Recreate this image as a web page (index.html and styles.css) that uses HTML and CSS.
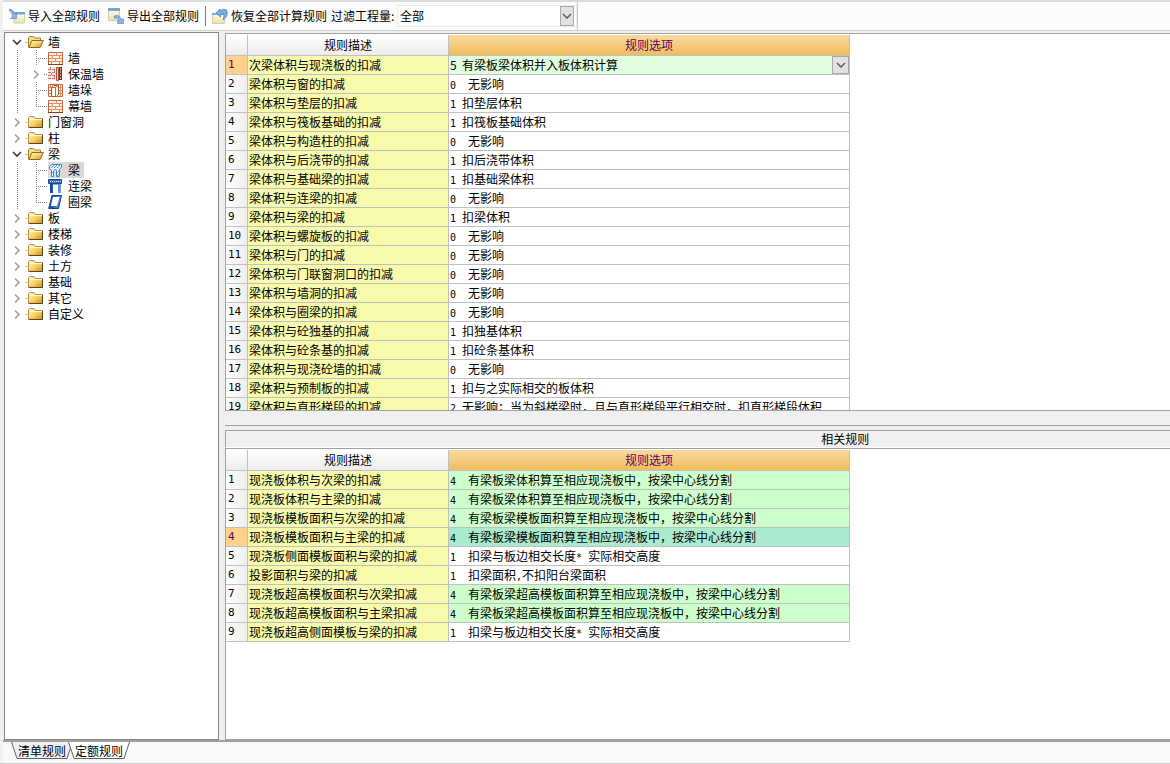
FILE: index.html
```html
<!DOCTYPE html>
<html lang="zh-CN">
<head>
<meta charset="utf-8">
<title>计算规则</title>
<link rel="stylesheet" href="styles.css">
</head>
<body>
<svg class="defs" aria-hidden="true">
  <defs>
    <linearGradient id="gold" x1="0" y1="0" x2="1" y2="1"><stop offset="0" stop-color="#fff6c4"/><stop offset=".5" stop-color="#f6d36c"/><stop offset="1" stop-color="#c98a1c"/></linearGradient>
    <linearGradient id="sheet" x1="0" y1="0" x2="0" y2="1"><stop offset="0" stop-color="#fffef0"/><stop offset="1" stop-color="#ece3a8"/></linearGradient>
    <linearGradient id="navy" x1="0" y1="0" x2="1" y2="0"><stop offset="0" stop-color="#123f94"/><stop offset="1" stop-color="#6ea2e4"/></linearGradient>
    <symbol id="closed" viewBox="0 0 16 16"><path d="M.5 13.500V3.500L1.500 2.500H6L7.500 4.500H14.500V13.500Z" fill="url(#gold)" stroke="#b8964c"/><path d="M1.500 5.500H14" stroke="#fff7d2"/><path d="M1 13.500H14.500V5" fill="none" stroke="#5c4713"/></symbol>
    <symbol id="open" viewBox="0 0 16 16"><path d="M.5 13V3.500L1.500 2.500H5.500L7 4H12.500V7" fill="#f4dc8e" stroke="#a98332"/><path d="M.7 13.500L4 6.500H15.500L12 13.500Z" fill="url(#gold)" stroke="#8a6a20"/></symbol>
    <symbol id="brick" viewBox="0 0 16 16"><path d="M.5 2.500H14.500V14.500H.5Z" fill="#fdf1e8" stroke="#c9683e"/><path d="M1 5.500H14M1 8.500H14M1 11.500H14M8.500 3V5M4.500 6V8M11.500 6V8M7.500 9V11M3.500 12V14M11.500 12V14" stroke="#e2906a" fill="none"/><path d="M0 14.500H15" stroke="#8f3c1c"/></symbol>
    <symbol id="insul" viewBox="0 0 16 16"><path d="M0 1H9V14H0Z" fill="#f8e2de"/><path d="M0 3.500H9M0 6.500H9M0 9.500H9M0 12.500H9" stroke="#d0766a" stroke-dasharray="3 1"/><path d="M2.500 1V3M6.500 4V6M3.500 7V9M6.500 10V12" stroke="#b08089"/><path d="M8.500 1.500H10.500V14.500H8.500Z" fill="#e8c0a8" stroke="#9a5a44"/><path d="M11 1H14V14H11Z" fill="#96230e"/><path d="M12.500 2V13" stroke="#f0a070" stroke-dasharray="2 1"/></symbol>
    <symbol id="pier" viewBox="0 0 16 16"><path d="M.5 2.500H14.500V14.500H.5Z" fill="#fdf1e8" stroke="#c9683e"/><path d="M1 5.500H14M1 8.500H4M11 8.500H14M1 11.500H4M11 11.500H14M12.500 3V14M2.500 3V5" stroke="#e2906a"/><path d="M3.500 5L5.500 3.500H10.500V12.500L8.500 14.500H3.500Z" fill="#fffaf6" stroke="#b85229"/><path d="M7.500 5V14M3.500 5.500H7.500L10 3.500" fill="none" stroke="#c96838"/></symbol>
    <symbol id="beam" viewBox="0 0 16 16"><path d="M1.500 4.500L4 2.500H13.500V5L11.500 7.500V14.500H8.500V8.500L7.500 7L5.500 9V14.500H3.500V8.500L1.500 6.500Z" fill="#eef8ff" stroke="#2f8cd2"/><path d="M3 6L6 3M6 6L9 3M9 6L12 3M4 11L5 10M9 11L11 9M9 14L11 12" stroke="#48a2df"/></symbol>
    <symbol id="link" viewBox="0 0 16 16"><path d="M.5 1.500H13.500V5.500H.5Z" fill="#3c70c0" stroke="#1b4594"/><path d="M2 3.500H13" stroke="#cfe0f8" stroke-dasharray="1 1"/><path d="M2 6H5V15H2ZM10 6H13V15H10Z" fill="url(#navy)"/><path d="M5 6.500H10" stroke="#7eaae2"/></symbol>
    <symbol id="ring" viewBox="0 0 16 16"><path d="M4 1.500H13.500L10.500 14.500H.7Z" fill="url(#navy)" stroke="#173e89"/><path d="M5 3H11.500L9 12H2.800Z" fill="#fff"/></symbol>
    <symbol id="import" viewBox="0 0 16 16"><path d="M5 5H15.500V15H5Z" fill="url(#sheet)" stroke="#d3ceae"/><path d="M5 4H16V6.500H5Z" fill="#7ea2d0"/><path d="M.5 1Q5 2 5.500 6L7.500 4.500V10.500H1.500L3.500 8.500Q3.500 4 .5 3Z" fill="#8bb1ea" stroke="#5d8bd2" stroke-width=".7"/></symbol>
    <symbol id="export" viewBox="0 0 16 16"><path d="M.5 1.500H11.500V12.500H.5Z" fill="url(#sheet)" stroke="#d3ceae"/><path d="M0 0H12V3H0Z" fill="#7ea2d0"/><path d="M6 8Q12 6 12.500 11H15.500V15.500H9.500V13L11 12Q10 9 6 10Z" fill="#8bb1ea" stroke="#5d8bd2" stroke-width=".7"/></symbol>
    <symbol id="restore" viewBox="0 0 16 16"><path d="M.5 5.500H12.500V15.500H.5Z" fill="url(#sheet)" stroke="#d3ceae"/><path d="M0 5H13V7H0Z" fill="#8aa9d0"/><path d="M4 5L8 1V3Q11 0 14.500 2Q17 8 11 12Q13 7 11 5.500Q9.500 5.500 8.500 7V9Z" fill="#7eabe8" stroke="#467bc7" stroke-width=".7"/></symbol>
    <symbol id="down" viewBox="0 0 10 10"><path d="M1 3L5 7L9 3" fill="none" stroke="#505050" stroke-width="1.300"/></symbol>
    <symbol id="t-open" viewBox="0 0 23 16"><path d="M8 6L12 10L16 6" fill="none" stroke="#404040" stroke-width="1.700"/><path d="M20.500 8.500H23" stroke="#808080" stroke-dasharray="1 1"/></symbol>
    <symbol id="t-closed" viewBox="0 0 23 16"><path d="M10 4.500L14 8.500L10 12.500" fill="none" stroke="#a0a0a0" stroke-width="1.500"/><path d="M20.500 8.500H23" stroke="#808080" stroke-dasharray="1 1"/></symbol>
    <symbol id="b-mid" viewBox="0 0 43 16"><path d="M12.500 0V16M31.500 0V16M33 8.500H43" stroke="#808080" stroke-dasharray="1 1"/></symbol>
    <symbol id="b-last" viewBox="0 0 43 16"><path d="M12.500 0V16M31.500 0V9M33 8.500H43" stroke="#808080" stroke-dasharray="1 1"/></symbol>
    <symbol id="b-more" viewBox="0 0 43 16"><path d="M12.500 0V16M39 8.500H43" stroke="#808080" stroke-dasharray="1 1"/><path d="M29 4.500L33 8.500L29 12.500" fill="none" stroke="#a0a0a0" stroke-width="1.500"/></symbol>
  </defs>
</svg>
<div class="app">
  <header class="top">
    <div class="toolbar">
      <button class="tool" type="button"><svg class="icon"><use href="#import"/></svg>导入全部规则</button>
      <button class="tool" type="button"><svg class="icon"><use href="#export"/></svg>导出全部规则</button>
      <span class="separator"></span>
      <button class="tool" type="button"><svg class="icon"><use href="#restore"/></svg>恢复全部计算规则</button>
      <label class="filter-label" for="filter">过滤工程量:</label>
      <div class="combo filter"><select id="filter"><option>全部</option></select><span class="arrow"><svg><use href="#down"/></svg></span></div>
    </div>
  </header>
  <main class="work">
    <nav class="tree" aria-label="构件类型">
      <ul>
        <li><div class="node"><button type="button" class="toggle" aria-label="折叠 墙"><svg><use href="#t-open"/></svg></button><svg class="icon"><use href="#open"/></svg><span class="name">墙</span></div>
          <ul>
            <li class="node"><svg class="branch"><use href="#b-mid"/></svg><svg class="icon"><use href="#brick"/></svg><span class="name">墙</span></li>
            <li class="node"><button type="button" class="toggle" aria-label="展开 保温墙"><svg class="branch"><use href="#b-more"/></svg></button><svg class="icon"><use href="#insul"/></svg><span class="name">保温墙</span></li>
            <li class="node"><svg class="branch"><use href="#b-mid"/></svg><svg class="icon"><use href="#pier"/></svg><span class="name">墙垛</span></li>
            <li class="node"><svg class="branch"><use href="#b-last"/></svg><svg class="icon"><use href="#brick"/></svg><span class="name">幕墙</span></li>
          </ul>
        </li>
        <li class="node"><button type="button" class="toggle" aria-label="展开 门窗洞"><svg><use href="#t-closed"/></svg></button><svg class="icon"><use href="#closed"/></svg><span class="name">门窗洞</span></li>
        <li class="node"><button type="button" class="toggle" aria-label="展开 柱"><svg><use href="#t-closed"/></svg></button><svg class="icon"><use href="#closed"/></svg><span class="name">柱</span></li>
        <li><div class="node"><button type="button" class="toggle" aria-label="折叠 梁"><svg><use href="#t-open"/></svg></button><svg class="icon"><use href="#open"/></svg><span class="name">梁</span></div>
          <ul>
            <li class="node current"><svg class="branch"><use href="#b-mid"/></svg><svg class="icon"><use href="#beam"/></svg><span class="name">梁</span></li>
            <li class="node"><svg class="branch"><use href="#b-mid"/></svg><svg class="icon"><use href="#link"/></svg><span class="name">连梁</span></li>
            <li class="node"><svg class="branch"><use href="#b-last"/></svg><svg class="icon"><use href="#ring"/></svg><span class="name">圈梁</span></li>
          </ul>
        </li>
        <li class="node"><button type="button" class="toggle" aria-label="展开 板"><svg><use href="#t-closed"/></svg></button><svg class="icon"><use href="#closed"/></svg><span class="name">板</span></li>
        <li class="node"><button type="button" class="toggle" aria-label="展开 楼梯"><svg><use href="#t-closed"/></svg></button><svg class="icon"><use href="#closed"/></svg><span class="name">楼梯</span></li>
        <li class="node"><button type="button" class="toggle" aria-label="展开 装修"><svg><use href="#t-closed"/></svg></button><svg class="icon"><use href="#closed"/></svg><span class="name">装修</span></li>
        <li class="node"><button type="button" class="toggle" aria-label="展开 土方"><svg><use href="#t-closed"/></svg></button><svg class="icon"><use href="#closed"/></svg><span class="name">土方</span></li>
        <li class="node"><button type="button" class="toggle" aria-label="展开 基础"><svg><use href="#t-closed"/></svg></button><svg class="icon"><use href="#closed"/></svg><span class="name">基础</span></li>
        <li class="node"><button type="button" class="toggle" aria-label="展开 其它"><svg><use href="#t-closed"/></svg></button><svg class="icon"><use href="#closed"/></svg><span class="name">其它</span></li>
        <li class="node"><button type="button" class="toggle" aria-label="展开 自定义"><svg><use href="#t-closed"/></svg></button><svg class="icon"><use href="#closed"/></svg><span class="name">自定义</span></li>
      </ul>
    </nav>
    <div class="panes">
      <section class="pane">
        <table class="rules">
          <colgroup><col class="c-num"><col class="c-desc"><col class="c-opt"></colgroup>
          <thead><tr><th></th><th>规则描述</th><th class="hot">规则选项</th></tr></thead>
          <tbody>
            <tr class="active editing"><th>1</th><td>次梁体积与现浇板的扣减</td><td><div class="combo"><select aria-label="规则选项"><option>5&nbsp;&nbsp;有梁板梁体积并入板体积计算</option></select><span class="arrow"><svg><use href="#down"/></svg></span></div></td></tr>
            <tr><th>2</th><td>梁体积与窗的扣减</td><td><span class="n">0  </span>无影响</td></tr>
            <tr><th>3</th><td>梁体积与垫层的扣减</td><td><span class="n">1 </span>扣垫层体积</td></tr>
            <tr><th>4</th><td>梁体积与筏板基础的扣减</td><td><span class="n">1 </span>扣筏板基础体积</td></tr>
            <tr><th>5</th><td>梁体积与构造柱的扣减</td><td><span class="n">0  </span>无影响</td></tr>
            <tr><th>6</th><td>梁体积与后浇带的扣减</td><td><span class="n">1 </span>扣后浇带体积</td></tr>
            <tr><th>7</th><td>梁体积与基础梁的扣减</td><td><span class="n">1 </span>扣基础梁体积</td></tr>
            <tr><th>8</th><td>梁体积与连梁的扣减</td><td><span class="n">0  </span>无影响</td></tr>
            <tr><th>9</th><td>梁体积与梁的扣减</td><td><span class="n">1 </span>扣梁体积</td></tr>
            <tr><th>10</th><td>梁体积与螺旋板的扣减</td><td><span class="n">0  </span>无影响</td></tr>
            <tr><th>11</th><td>梁体积与门的扣减</td><td><span class="n">0  </span>无影响</td></tr>
            <tr><th>12</th><td>梁体积与门联窗洞口的扣减</td><td><span class="n">0  </span>无影响</td></tr>
            <tr><th>13</th><td>梁体积与墙洞的扣减</td><td><span class="n">0  </span>无影响</td></tr>
            <tr><th>14</th><td>梁体积与圈梁的扣减</td><td><span class="n">0  </span>无影响</td></tr>
            <tr><th>15</th><td>梁体积与砼独基的扣减</td><td><span class="n">1 </span>扣独基体积</td></tr>
            <tr><th>16</th><td>梁体积与砼条基的扣减</td><td><span class="n">1 </span>扣砼条基体积</td></tr>
            <tr><th>17</th><td>梁体积与现浇砼墙的扣减</td><td><span class="n">0  </span>无影响</td></tr>
            <tr><th>18</th><td>梁体积与预制板的扣减</td><td><span class="n">1 </span>扣与之实际相交的板体积</td></tr>
            <tr><th>19</th><td>梁体积与直形梯段的扣减</td><td><span class="n">2 </span>无影响；当为斜梯梁时，且与直形梯段平行相交时，扣直形梯段体积</td></tr>
          </tbody>
        </table>
      </section>
      <div class="splitter"></div>
      <h2 class="caption">相关规则</h2>
      <section class="pane">
        <table class="rules">
          <colgroup><col class="c-num"><col class="c-desc"><col class="c-opt"></colgroup>
          <thead><tr><th></th><th>规则描述</th><th class="hot">规则选项</th></tr></thead>
          <tbody>
            <tr class="linked"><th>1</th><td>现浇板体积与次梁的扣减</td><td><span class="n">4  </span>有梁板梁体积算至相应现浇板中，按梁中心线分割</td></tr>
            <tr class="linked"><th>2</th><td>现浇板体积与主梁的扣减</td><td><span class="n">4  </span>有梁板梁体积算至相应现浇板中，按梁中心线分割</td></tr>
            <tr class="linked"><th>3</th><td>现浇板模板面积与次梁的扣减</td><td><span class="n">4  </span>有梁板梁模板面积算至相应现浇板中，按梁中心线分割</td></tr>
            <tr class="linked active"><th>4</th><td>现浇板模板面积与主梁的扣减</td><td><span class="n">4  </span>有梁板梁模板面积算至相应现浇板中，按梁中心线分割</td></tr>
            <tr><th>5</th><td>现浇板侧面模板面积与梁的扣减</td><td><span class="n">1  </span>扣梁与板边相交长度<span class="n">* </span>实际相交高度</td></tr>
            <tr><th>6</th><td>投影面积与梁的扣减</td><td><span class="n">1  </span>扣梁面积<span class="n">,</span>不扣阳台梁面积</td></tr>
            <tr class="linked"><th>7</th><td>现浇板超高模板面积与次梁扣减</td><td><span class="n">4  </span>有梁板梁超高模板面积算至相应现浇板中，按梁中心线分割</td></tr>
            <tr class="linked"><th>8</th><td>现浇板超高模板面积与主梁扣减</td><td><span class="n">4  </span>有梁板梁超高模板面积算至相应现浇板中，按梁中心线分割</td></tr>
            <tr><th>9</th><td>现浇板超高侧面模板与梁的扣减</td><td><span class="n">1  </span>扣梁与板边相交长度<span class="n">* </span>实际相交高度</td></tr>
          </tbody>
        </table>
      </section>
    </div>
  </main>
  <footer class="tabs">
    <button type="button" class="tab"><svg class="shape" viewBox="0 0 62 17" preserveAspectRatio="none"><path d="M.5 0L6 16.500H56L61.500 0" fill="#f0f0f0" stroke="#606060"/></svg><span>清单规则</span></button>
    <button type="button" class="tab"><svg class="shape" viewBox="0 0 62 17" preserveAspectRatio="none"><path d="M.5 0L6 16.500H56L61.500 0" fill="#fff" stroke="#606060"/></svg><span>定额规则</span></button>
  </footer>
</div>
</body>
</html>
```

FILE: styles.css
```css
* {
  box-sizing: border-box;
}

body {
  margin: 0;
  background: #f0f0f0;
  color: #000;
  font: 12px/16px "Noto Sans CJK SC", sans-serif;
}

button,
select {
  margin: 0;
  padding: 0;
  border: 0;
  background: none;
  color: inherit;
  font: inherit;
}

ul {
  margin: 0;
  padding: 0;
  list-style: none;
}

svg {
  display: block;
}

.defs {
  position: absolute;
  width: 0;
  height: 0;
}

.app {
  display: flex;
  flex-direction: column;
  height: 100vh;
  padding-left: 3px;
  border-bottom: 1px solid #d0d0d0;
}

.icon {
  flex: none;
  width: 16px;
  height: 16px;
}

/* Toolbar */

.top {
  display: flex;
  flex: none;
  height: 31px;
  border-top: 2px solid #dcdcdc;
  border-bottom: 1px solid #d0d0d0;
  background: #fcfcfc;
}

.toolbar {
  display: flex;
  align-items: center;
  padding: 0 0 0 6px;
  border-right: 1px solid #c8c8c8;
}

.tool {
  display: flex;
  align-items: center;
  gap: 3px;
  margin-right: 8px;
}

.separator {
  width: 1px;
  height: 20px;
  margin-left: -2px;
  margin-right: 6px;
  background: #808080;
}

.tool + .filter-label {
  margin-left: -4px;
}

.filter-label {
  width: 66px;
  white-space: nowrap;
}

.combo {
  position: relative;
}

.combo select {
  width: 100%;
  height: 100%;
  appearance: none;
  outline: 0;
}

.arrow {
  position: absolute;
  top: 0;
  right: 0;
  bottom: 0;
  display: grid;
  place-items: center;
  width: 17px;
  border: 1px solid #a8a8a8;
  background: #e1e1e1;
  pointer-events: none;
}

.arrow svg {
  width: 10px;
  height: 10px;
}

.filter {
  width: 180px;
  height: 22px;
  border: 1px solid #ececec;
  background: #fff;
}

.filter select {
  padding-left: 2px;
}

.filter .arrow {
  right: 2px;
  width: 14px;
}

/* Work area */

.work {
  display: flex;
  flex: 1;
  gap: 6px;
  min-height: 0;
  padding-top: 1px;
  border-bottom: 2px solid #a0a0a0;
}

.tree {
  flex: none;
  width: 215px;
  padding-top: 1px;
  margin-left: 1px;
  overflow: hidden;
  border: 1px solid #828790;
  background: #fff;
}

.node {
  display: flex;
  height: 16px;
}

.toggle svg {
  width: 23px;
  height: 16px;
}

.branch,
.toggle .branch {
  flex: none;
  width: 43px;
  height: 16px;
}

.name {
  padding: 0 4px;
}

.current .icon,
.current .name {
  background: #d9d9d9;
}

/* Rule grids */

.panes {
  display: grid;
  flex: 1;
  grid-template-rows: minmax(0, 378fr) 15px 22px minmax(0, 292fr);
  min-width: 0;
  padding-top: 1px;
}

.pane {
  overflow: hidden;
  padding-top: 1px;
  border: 1px solid #a0a0a0;
  border-right: 0;
  background: #fff;
}

.splitter {
  border-bottom: 1px solid #a0a0a0;
}

.caption {
  margin: 4px 0 0;
  padding-left: 63%;
  border-top: 1px solid #a0a0a0;
  border-left: 1px solid #a0a0a0;
  border-bottom: 1px solid #fff;
  font-size: 12px;
  font-weight: 400;
  line-height: 16px;
}

.rules {
  width: 624px;
  border-spacing: 0;
  table-layout: fixed;
}

.c-num {
  width: 22px;
}

.c-desc {
  width: 201px;
}

.c-opt {
  width: 401px;
}

.rules th,
.rules td {
  height: 19px;
  padding: 0 1px;
  overflow: hidden;
  border-right: 1px solid #c0c0c0;
  border-bottom: 1px solid #c0c0c0;
  font-weight: 400;
  line-height: 16px;
  text-align: left;
  white-space: nowrap;
}

.rules thead th {
  height: 21px;
  background: linear-gradient(#fff, #ececec);
  text-align: center;
}

.rules thead .hot {
  background: linear-gradient(#f9d9a0, #f0bd5c);
  color: #600060;
}

.rules tbody th {
  padding-left: 2px;
  background: linear-gradient(90deg, #fff, #eee);
  font: 11px/16px "DejaVu Sans Mono", monospace;
}

.rules td:nth-child(2) {
  background: #f7fbab;
}

.rules .linked td:last-child {
  background: #ccffcc;
}

.rules .linked.active td:last-child {
  background: #aaebcf;
}

.rules .active th {
  background: #ffd28c;
  color: #600060;
}

.rules .editing td:last-child {
  padding: 0;
  background: #dfffdf;
}

.rules .combo {
  height: 18px;
}

.rules .combo select {
  padding-left: 1px;
}

.n {
  font: 10px/12px "DejaVu Sans Mono", monospace;
  white-space: pre;
}

/* Bottom tabs */

.tabs {
  display: flex;
  flex: none;
  height: 21px;
  padding-left: 8px;
  background: #f9f9f9;
}

.tab {
  position: relative;
  width: 62px;
  height: 17px;
  margin-right: -5px;
}

.tab span {
  position: relative;
}

.shape {
  position: absolute;
  inset: 0;
  width: 100%;
  height: 100%;
}
```
